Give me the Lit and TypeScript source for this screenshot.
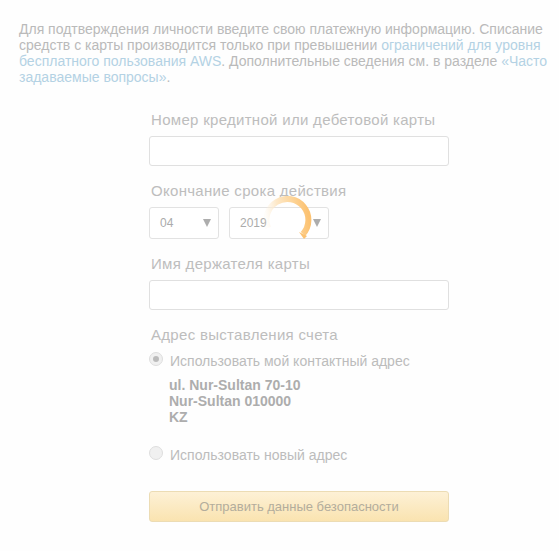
import { LitElement, html, css } from "lit";
import { customElement } from "lit/decorators.js";

@customElement("app-root")
export class AppRoot extends LitElement {
  static styles = css`
    :host { display: block; width: 559px; height: 551px; background: #fefefe; font-family: "Liberation Sans", Arial, sans-serif; color: #a9a9a9; overflow: hidden; }
    .intro { margin: 0; padding: 21px 0 0 19px; width: 535px; font-size: 14px; line-height: 16px; color: #bababa; }
    .intro a { color: #b4d2e4; text-decoration: none; }
    .form { width: 300px; margin: 26px 0 0 149px; position: relative; }
    .label { display: block; padding-left: 2px; font-size: 15px; line-height: 18px; color: #bdbdbd; letter-spacing: .3px; white-space: nowrap; }
    .input { box-sizing: border-box; display: block; width: 300px; height: 30px; border: 1px solid #e0e0e0; border-radius: 3px; background: #fff; margin-top: 7px; }
    .g2 { margin-top: 16px; }
    .g3 { margin-top: 16px; }
    .g4 { margin-top: 16px; }
    .row { display: flex; gap: 10px; margin-top: 7px; }
    .select { box-sizing: border-box; height: 32px; border: 1px solid #e2e2e2; border-radius: 3px; background: #fff; display: flex; align-items: center; justify-content: space-between; padding: 0 7px 0 10px; font-size: 12px; color: #ababab; }
    .month { width: 70px; }
    .year { width: 100px; }
    .arrow { width: 0; height: 0; border-left: 4px solid transparent; border-right: 4px solid transparent; border-top: 8px solid #adadad; }
    .spinner { position: absolute; left: 115px; top: 85px; width: 48px; height: 48px; }
    .radio { display: flex; align-items: center; gap: 7px; font-size: 14px; line-height: 18px; color: #bcbcbc; white-space: nowrap; }
    .r1 { margin-top: 8px; }
    .r2 { margin-top: 21px; }
    .dot { box-sizing: border-box; width: 14px; height: 14px; margin-bottom: 4px; border-radius: 50%; background: #f0f0f0; border: 1px solid #dedede; display: flex; align-items: center; justify-content: center; }
    .dot i { width: 6px; height: 6px; border-radius: 50%; background: #bbbbbb; display: block; }
    .address { margin: 7px 0 0 20px; font-size: 14px; font-weight: bold; line-height: 16px; color: #adadad; }
    .button { box-sizing: border-box; display: block; width: 300px; height: 31px; margin-top: 27px; border: 1px solid #ecdcb4; border-radius: 3px; background: linear-gradient(#fdf1d6, #fae3b0); font: 13px "Liberation Sans", Arial, sans-serif; color: #b3ad9c; padding: 0; }
  `;

  render() {
    return html`
      <p class="intro">Для подтверждения личности введите свою платежную информацию. Списание средств с карты производится только при превышении <a>ограничений для уровня бесплатного пользования AWS</a>. Дополнительные сведения см. в разделе <a>«Часто задаваемые вопросы»</a>.</p>
      <div class="form">
        <span class="label">Номер кредитной или дебетовой карты</span>
        <div class="input"></div>
        <div class="g2">
          <span class="label">Окончание срока действия</span>
          <div class="row">
            <div class="select month"><span>04</span><span class="arrow"></span></div>
            <div class="select year"><span>2019</span><span class="arrow"></span></div>
          </div>
        </div>
        <div class="g3">
          <span class="label">Имя держателя карты</span>
          <div class="input"></div>
        </div>
        <div class="g4">
          <span class="label">Адрес выставления счета</span>
          <div class="radio r1"><span class="dot"><i></i></span>Использовать мой контактный адрес</div>
          <div class="address">ul. Nur-Sultan 70-10<br />Nur-Sultan 010000<br />KZ</div>
          <div class="radio r2"><span class="dot"></span>Использовать новый адрес</div>
        </div>
        <button class="button">Отправить данные безопасности</button>
        <svg class="spinner" viewBox="0 0 48 48">
          <defs>
            <linearGradient id="g" gradientUnits="userSpaceOnUse" x1="3" y1="30" x2="45" y2="24">
              <stop offset="0" stop-color="#fdf1dd" stop-opacity=".15" />
              <stop offset="0.3" stop-color="#fde8c8" />
              <stop offset="0.65" stop-color="#fdd69c" />
              <stop offset="1" stop-color="#fcc271" />
            </linearGradient>
          </defs>
          <path d="M4 32 A21 21 0 1 1 39 38" fill="none" stroke="url(#g)" stroke-width="6" />
          <path d="M35 36 L43 40 L40 43 Z" fill="#fcc271" />
        </svg>
      </div>
    `;
  }
}
